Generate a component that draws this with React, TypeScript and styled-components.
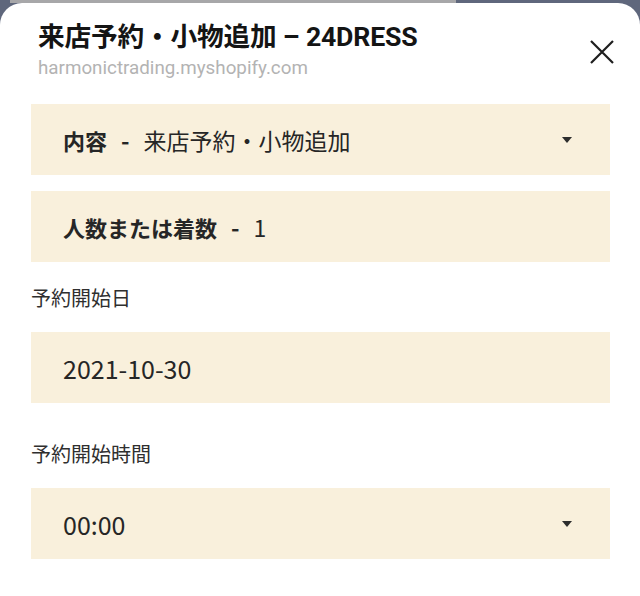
import styled, { createGlobalStyle } from "styled-components";

const GlobalStyle = createGlobalStyle`
    html, body {
        margin: 0;
        padding: 0;
        background: #5f677c;
    }
    body {
        font-family: Roboto, "Noto Sans CJK JP", sans-serif;
    }
`;

const Backdrop = styled.div`
    width: 640px;
    height: 596px;
    display: flex;
    flex-direction: column;
    overflow: hidden;
`;

const LoadBar = styled.div`
    height: 3px;
    display: flex;
`;

const LoadFill = styled.div`
    margin-left: 10px;
    width: 446px;
    background: #a7a7a9;
`;

const Sheet = styled.div`
    flex: 1;
    background: #ffffff;
    border-radius: 22px 22px 0 0;
    padding: 16px 30px 0 31px;
    box-sizing: border-box;
`;

const Header = styled.div`
    display: flex;
    justify-content: space-between;
    align-items: flex-start;
    padding-left: 7px;
    height: 85px;
`;

const TitleBlock = styled.div`
    display: flex;
    flex-direction: column;
`;

const Title = styled.h1`
    margin: 0;
    font-family: Roboto, "Noto Sans CJK JP", sans-serif;
    font-size: 26.7px;
    font-weight: 700;
    line-height: 36px;
    color: #141414;
    letter-spacing: -0.2px;
`;

const Domain = styled.div`
    margin-top: 1px;
    font-family: Roboto, sans-serif;
    font-size: 18.8px;
    line-height: 24px;
    color: #b3b3b3;
`;

const CloseButton = styled.button`
    border: none;
    background: none;
    padding: 0;
    margin: 16px -9px 0 0;
    width: 34px;
    height: 34px;
    display: flex;
    align-items: center;
    justify-content: center;
    cursor: pointer;
`;

const Field = styled.div<{ $gap?: number }>`
    margin-top: ${props => props.$gap ?? 0}px;
    height: 71px;
    background: #f9f0dc;
    display: flex;
    align-items: center;
    justify-content: space-between;
    padding: 0 38px 0 32px;
    font-family: "Noto Sans CJK JP", sans-serif;
    font-size: 22px;
    color: #262626;
`;

const FieldText = styled.span<{ $large?: boolean }>`
    font-size: ${props => props.$large ? "25px" : "23px"};
    white-space: nowrap;
`;

const FieldLabel = styled.strong`
    font-weight: 700;
    font-size: 22px;
`;

const Dash = styled.span`
    font-weight: 700;
    margin: 0 14px 0 14px;
`;

const Caret = styled.span`
    width: 0;
    height: 0;
    border-left: 5.5px solid transparent;
    border-right: 5.5px solid transparent;
    border-top: 6px solid #2d2d2d;
`;

const Label = styled.div<{ $gap: number }>`
    margin-top: ${props => props.$gap}px;
    margin-bottom: 19px;
    line-height: 30px;
    font-family: "Noto Sans CJK JP", sans-serif;
    font-size: 20px;
    color: #2f2f2f;
`;

const CloseIcon = () => (
    <svg width="26" height="26" viewBox="0 0 26 26">
        <path d="M2 2 L24 24 M24 2 L2 24" stroke="#1e1e1e" strokeWidth="2.2" fill="none" />
    </svg>
);

export default function App() {
    return (
        <>
            <GlobalStyle />
            <Backdrop>
                <LoadBar>
                    <LoadFill />
                </LoadBar>
                <Sheet>
                    <Header>
                        <TitleBlock>
                            <Title>来店予約・小物追加 – 24DRESS</Title>
                            <Domain>harmonictrading.myshopify.com</Domain>
                        </TitleBlock>
                        <CloseButton aria-label="閉じる">
                            <CloseIcon />
                        </CloseButton>
                    </Header>

                    <Field>
                        <FieldText>
                            <FieldLabel>内容</FieldLabel>
                            <Dash>-</Dash>
                            来店予約・小物追加
                        </FieldText>
                        <Caret />
                    </Field>

                    <Field $gap={16}>
                        <FieldText>
                            <FieldLabel>人数または着数</FieldLabel>
                            <Dash>-</Dash>
                            1
                        </FieldText>
                    </Field>

                    <Label $gap={21}>予約開始日</Label>
                    <Field>
                        <FieldText $large>2021-10-30</FieldText>
                    </Field>

                    <Label $gap={36}>予約開始時間</Label>
                    <Field>
                        <FieldText $large>00:00</FieldText>
                        <Caret />
                    </Field>
                </Sheet>
            </Backdrop>
        </>
    );
}
